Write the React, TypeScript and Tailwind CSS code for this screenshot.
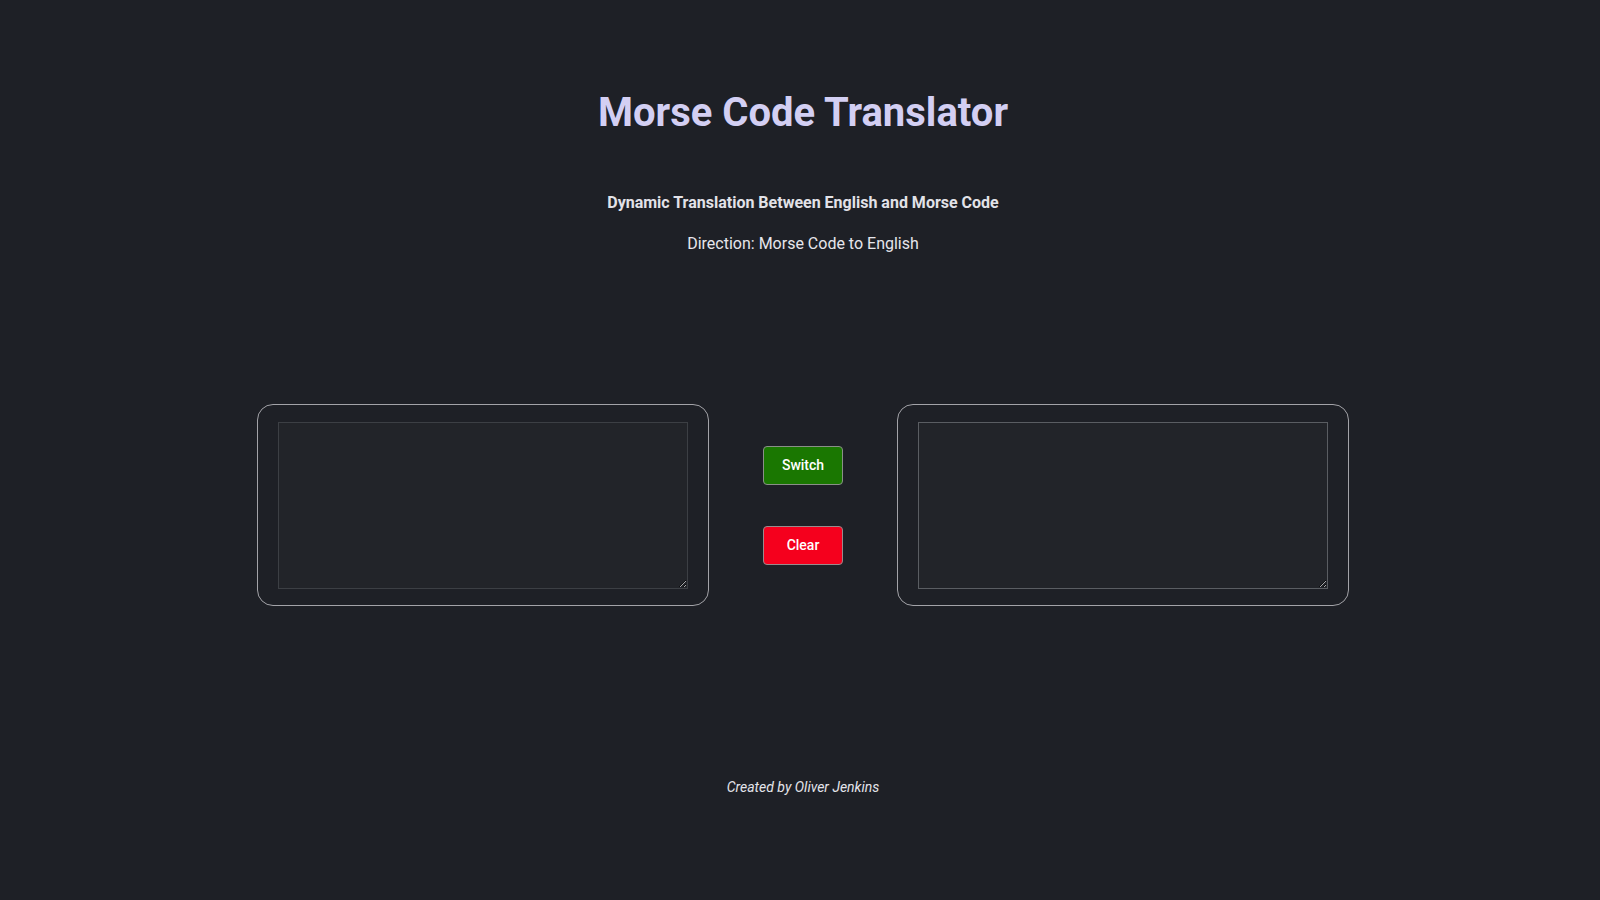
import React from "react";

export default function App() {
  const [input, setInput] = React.useState("");
  const [output, setOutput] = React.useState("");
  const [toEnglish, setToEnglish] = React.useState(true);
  const font = 'Roboto, "Liberation Sans", Arial, sans-serif';

  return (
    <div
      className="min-h-[900px] w-full bg-[#1e2026] pl-[6px] flex flex-col items-center text-[#e4e4ea]"
      style={{ fontFamily: font }}
    >
      <h1 className="mt-[89px] text-[40px] leading-[48px] font-bold text-[#d3cff3]">Morse Code Translator</h1>
      <h2 className="mt-[54px] text-[16px] leading-[24px] font-bold text-[#e2e2e8]">
        Dynamic Translation Between English and Morse Code
      </h2>
      <p className="mt-[17px] text-[16px] leading-[24px] text-[#e6e6ec]">
        Direction: {toEnglish ? "Morse Code to English" : "English to Morse Code"}
      </p>

      <div className="mt-[148px] flex items-center gap-[54px]">
        <div className="w-[452px] h-[202px] rounded-[16px] border border-[#a3a3a8] px-[20px] pt-[17px] pb-[16px]">
          <textarea
            value={input}
            onChange={(e) => setInput(e.target.value)}
            className="block w-full h-full bg-[#222429] border border-[#3c3f44] text-[#e4e4ea] p-2 outline-none resize"
          />
        </div>
        <div className="flex flex-col gap-[41px] w-[80px]">
          <button
            type="button"
            onClick={() => setToEnglish(!toEnglish)}
            className="h-[39px] w-[80px] rounded-[4px] border border-[#8a8f88] bg-[#1a7701] text-white text-[14px] font-medium"
          >
            Switch
          </button>
          <button
            type="button"
            onClick={() => {
              setInput("");
              setOutput("");
            }}
            className="h-[39px] w-[80px] rounded-[4px] border border-[#9a8a8c] bg-[#f5001d] text-white text-[14px] font-medium"
          >
            Clear
          </button>
        </div>
        <div className="w-[452px] h-[202px] rounded-[16px] border border-[#a3a3a8] px-[20px] pt-[17px] pb-[16px]">
          <textarea
            value={output}
            onChange={(e) => setOutput(e.target.value)}
            className="block w-full h-full bg-[#222429] border border-[#5a5d62] text-[#e4e4ea] p-2 outline-none resize"
          />
        </div>
      </div>

      <p className="mt-[171px] text-[14px] leading-[20px] italic text-[#e4e4ea]">Created by Oliver Jenkins</p>
    </div>
  );
}
